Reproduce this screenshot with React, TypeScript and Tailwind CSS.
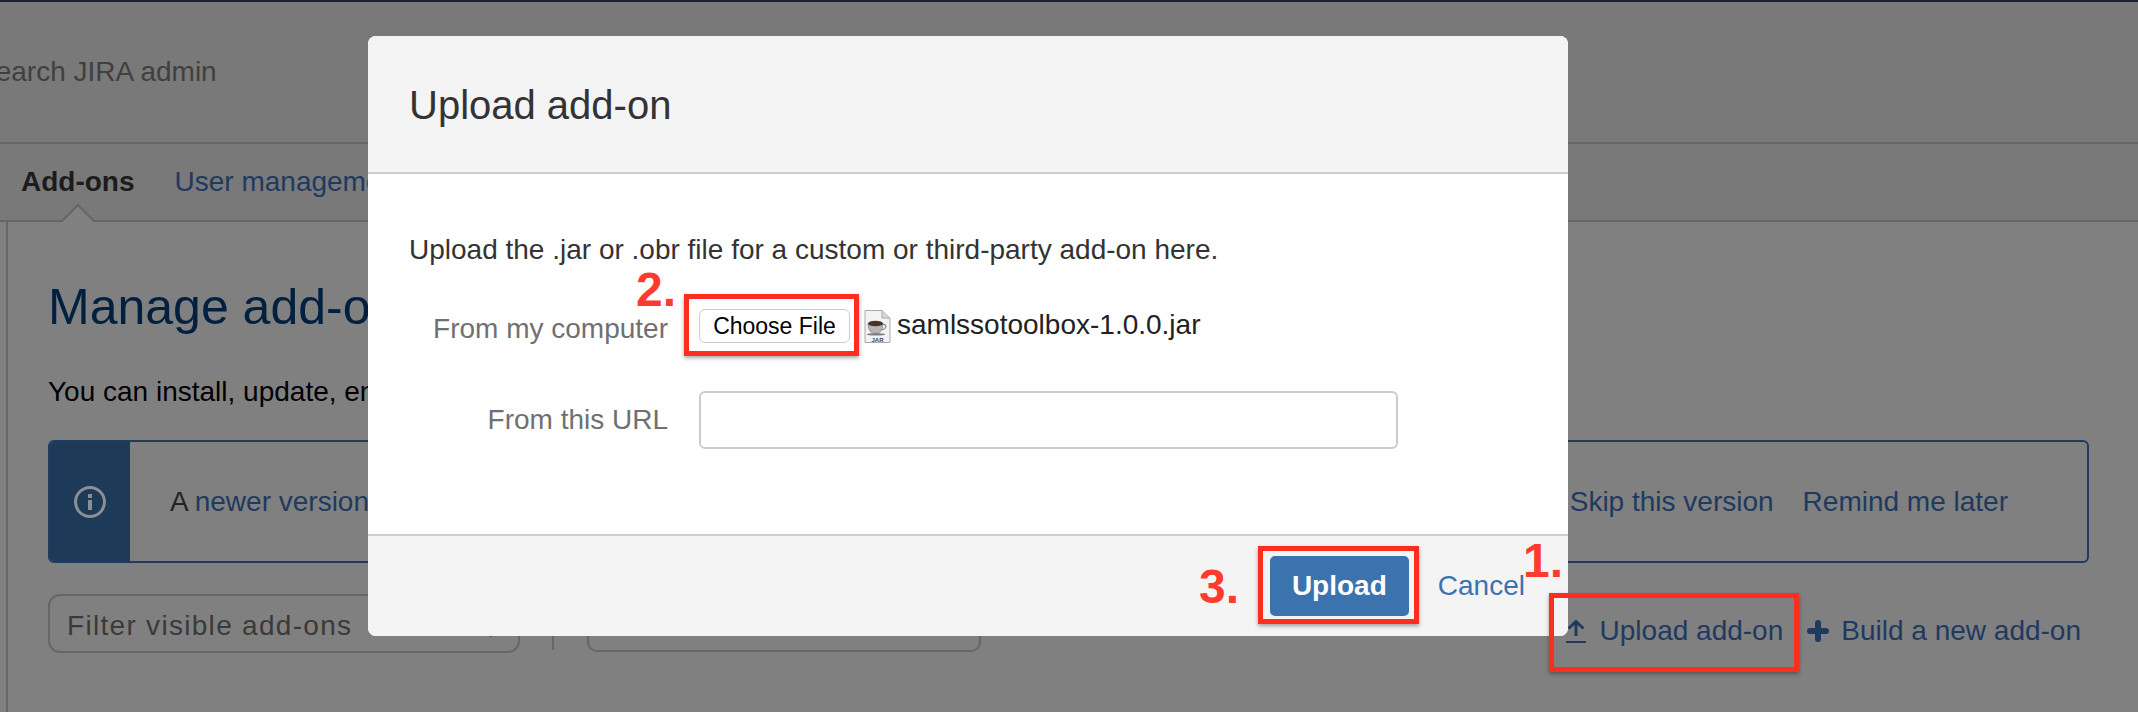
import { Search } from "lucide-react";

const SANS = "font-['Liberation_Sans',Arial,sans-serif]";

function JarIcon() {
  return (
    <svg width="27" height="33" viewBox="0 0 27 33" className="shrink-0">
      <path d="M1 .5H18L26 8V32.5H1Z" fill="#f3f3f3" stroke="#a9a9a9" />
      <path d="M18 .5V8H26" fill="#d6d6d6" stroke="#a9a9a9" />
      <path d="M4 13.5C4 20 7 23.5 11.5 23.5S19 20 19 13.5Z" fill="#b5b5b5" stroke="#6f6f6f" strokeWidth=".6" />
      <path d="M19 14.5C23 13.5 23 19 17.5 20" fill="none" stroke="#8a8a8a" strokeWidth="1.2" />
      <ellipse cx="11.5" cy="13.5" rx="7.5" ry="2.8" fill="#4a3324" />
      <ellipse cx="12" cy="24.3" rx="9.5" ry="1.3" fill="#7f7f7f" />
      <text x="13.5" y="31.6" textAnchor="middle" fontSize="6" fontWeight="700" fontFamily="Liberation Sans" fill="#444444">
        JAR
      </text>
    </svg>
  );
}

function UploadIcon() {
  return (
    <svg width="20" height="24" viewBox="0 0 20 24" fill="none" stroke="#1e3a5f" strokeWidth="3">
      <path d="M10 17V2.5M2.5 9.5L10 2.5l7.500 7" />
      <path d="M0 23h20" strokeWidth="2" />
    </svg>
  );
}

function PlusIcon() {
  return (
    <svg width="22" height="22" viewBox="0 0 22 22" fill="none" stroke="#1e3a5f" strokeWidth="6" strokeLinecap="round">
      <path d="M11 3v16M3 11h16" />
    </svg>
  );
}

function InfoIcon() {
  return (
    <svg width="32" height="32" viewBox="0 0 32 32" fill="none">
      <circle cx="16" cy="16" r="14.500" stroke="#8b8f94" strokeWidth="3" />
      <rect x="14" y="14" width="4" height="10" fill="#8b8f94" />
      <rect x="14" y="8" width="4" height="4" fill="#8b8f94" />
    </svg>
  );
}

function Background() {
  return (
    <div className="h-[712px] overflow-hidden bg-[#808080]">
      <div className="h-[2px] bg-[#1b2236]" />
      <div className="flex h-[142px] items-center border-b-2 border-[#666666] bg-[#797979]">
        <span className="ml-[-23px] text-[28px] text-[#404040]">Search JIRA admin</span>
      </div>
      <div className="relative flex h-[78px] items-center gap-[40px] whitespace-nowrap border-b-2 border-[#666666] bg-[#797979] pl-[21px] text-[28px]">
        <span className="font-bold text-[#1c1c1c]">Add-ons</span>
        <span className="text-[#1e3a5f]">User management</span>
        <svg width="34" height="18" viewBox="0 0 34 18" className="absolute bottom-[-2px] left-[61px]">
          <path d="M0 17H1L17 1L33 17H34V18H0Z" fill="#808080" />
          <path d="M0 17H1L17 1L33 17H34" fill="none" stroke="#666666" strokeWidth="2" />
        </svg>
      </div>
      <div className="ml-[6px] h-[490px] border-l-2 border-[#666666] pl-[40px] pr-[49px] pt-[46px]">
        <h1 className="text-[50px] leading-[78px] text-[#00203f]">Manage add-ons</h1>
        <p className="mt-[26px] text-[28px] leading-[40px] text-black">You can install, update, enable, and disable add-ons here.</p>
        <div className="mt-[28px] flex h-[123px] overflow-hidden rounded-[6px] border-2 border-[#1f3b5e]">
          <div className="flex w-[80px] items-center justify-center bg-[#1d3a59]">
            <InfoIcon />
          </div>
          <div className="flex flex-1 items-center pl-[40px] pr-[79px] text-[28px]">
            <span className="text-[#222222]">A</span>
            <span className="ml-[6px] text-[#1e3a5f]">newer version of JIRA is available</span>
            <span className="ml-auto text-[#1e3a5f]">Skip this version</span>
            <span className="ml-[29px] text-[#1e3a5f]">Remind me later</span>
          </div>
        </div>
        <div className="mt-[31px] flex items-start">
          <div className="flex h-[59px] w-[472px] items-center justify-between rounded-[12px] border-2 border-[#666666] pl-[17px] pr-[24px] pt-[4px] text-[28px] tracking-[1.3px] text-[#3a3a3a]">
            Filter visible add-ons
            <Search size={24} className="mt-[2px] text-[#404040]" />
          </div>
          <div className="ml-[32px] h-[56px] border-l-2 border-[#666666]" />
          <div className="ml-[33px] h-[58px] w-[394px] rounded-[10px] border-2 border-[#666666]" />
          <div className="ml-auto mr-[8px] mt-[16px] flex items-center text-[28px] text-[#1e3a5f]">
            <UploadIcon />
            <span className="ml-[14px]">Upload add-on</span>
            <span className="ml-[24px]">
              <PlusIcon />
            </span>
            <span className="ml-[12px]">Build a new add-on</span>
          </div>
        </div>
      </div>
    </div>
  );
}

function UploadDialog() {
  return (
    <div className="absolute left-[368px] top-[36px] flex h-[600px] w-[1200px] flex-col overflow-hidden rounded-[8px] bg-white">
      <div className="flex h-[138px] items-center border-b-2 border-[#cccccc] bg-[#f4f4f4] pl-[41px] pt-[1px] text-[40px] text-[#333333]">
        Upload add-on
      </div>
      <div className="flex-1 pl-[41px] pt-[58px]">
        <p className="text-[28px] leading-[36px] text-[#333333]">Upload the .jar or .obr file for a custom or third-party add-on here.</p>
        <div className="mt-[40px] flex h-[42px] items-center">
          <label className="w-[259px] text-right text-[28px] text-[#707070]">From my computer</label>
          <button className="mb-[6px] ml-[31px] flex h-[34px] w-[151px] items-center justify-center rounded-[6px] border border-[#cccccc] bg-white text-[23px] text-black">
            Choose File
          </button>
          <span className="mb-[6px] ml-[14px] flex">
            <JarIcon />
          </span>
          <span className="mb-[8px] ml-[6px] text-[28px] leading-[34px] text-[#222222]">samlssotoolbox-1.0.0.jar</span>
        </div>
        <div className="mt-[41px] flex items-center">
          <label className="w-[259px] text-right text-[28px] text-[#707070]">From this URL</label>
          <input className="ml-[31px] h-[58px] w-[699px] rounded-[6px] border-2 border-[#cccccc] bg-white" />
        </div>
      </div>
      <div className="flex h-[102px] items-center justify-end border-t-2 border-[#cccccc] bg-[#f4f4f4] pr-[43px]">
        <button className="flex h-[60px] w-[139px] items-center justify-center rounded-[5px] bg-[#3b73af] text-[28px] font-bold text-white">
          Upload
        </button>
        <span className="ml-[29px] text-[28px] text-[#3b73af]">Cancel</span>
      </div>
    </div>
  );
}

function Callout({ className }: { className: string }) {
  return <div className={`absolute border-[5px] border-[#ff2d20] shadow-[0_2px_4px_rgba(0,0,0,0.35)] ${className}`} />;
}

function Step({ className, children }: { className: string; children: string }) {
  return <span className={`absolute text-[48px] font-bold leading-none text-[#ff3b30] ${className}`}>{children}</span>;
}

export default function App() {
  return (
    <div className={`relative h-[712px] w-[2138px] overflow-hidden ${SANS}`}>
      <Background />
      <UploadDialog />
      <Callout className="left-[684px] top-[294px] h-[62px] w-[175px]" />
      <Callout className="left-[1258px] top-[546px] h-[78px] w-[161px]" />
      <Callout className="left-[1549px] top-[593px] h-[79px] w-[250px]" />
      <Step className="left-[636px] top-[266px]">2.</Step>
      <Step className="left-[1199px] top-[563px]">3.</Step>
      <Step className="left-[1523px] top-[537px]">1.</Step>
    </div>
  );
}
